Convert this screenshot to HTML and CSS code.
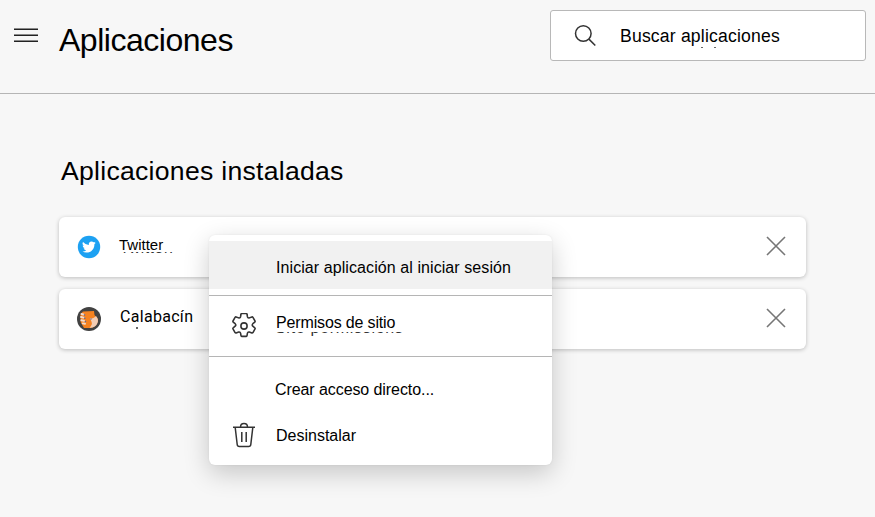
FILE: index.html
```html
<!DOCTYPE html>
<html lang="es">
<head>
<meta charset="utf-8">
<title>Aplicaciones</title>
<link rel="stylesheet" href="styles.css">
</head>
<body>
<header class="topbar">
  <svg class="burger" width="24" height="14" viewBox="0 0 24 14"><path fill="#8a8a8a" d="M0 0h24v1H0zM0 6h24v1H0zM0 12h24v1H0z"/><path fill="#222" d="M0 1h24v1H0zM0 7h24v1H0zM0 13h24v1H0z"/></svg>
  <h1 class="title">Aplicaciones</h1>
  <div class="search">
    <svg class="search-icon" width="24" height="24" viewBox="0 0 24 24" fill="none" stroke="#333" stroke-width="1.5"><circle cx="9.300" cy="9.500" r="7.8"/><path d="M14.900 15.100l6.400 6.400"/></svg>
    <span class="label search-label">Buscar aplicaciones<span class="trace trace-search" aria-hidden="true"><i></i><i></i></span></span>
  </div>
</header>
<main class="content">
  <h2 class="subtitle">Aplicaciones instaladas</h2>
  <div class="card">
    <svg class="app-icon" width="24" height="24" viewBox="0 0 24 24"><circle cx="12" cy="12" r="11.2" fill="#1da1f2"/><path fill="#fff" transform="translate(5.1 5.2) scale(.57)" d="M23.95 4.57a10 10 0 0 1-2.82.77 4.96 4.96 0 0 0 2.16-2.72 9.9 9.9 0 0 1-3.12 1.18 4.92 4.92 0 0 0-8.38 4.48A13.93 13.93 0 0 1 1.64 3.16a4.92 4.92 0 0 0 1.52 6.57 4.9 4.9 0 0 1-2.23-.61v.06a4.92 4.92 0 0 0 3.95 4.83 5 5 0 0 1-2.21.08 4.94 4.94 0 0 0 4.6 3.42A9.87 9.87 0 0 1 0 19.54a13.99 13.99 0 0 0 7.55 2.21c9.05 0 14-7.5 14-13.98l-.02-.64a9.94 9.94 0 0 0 2.42-2.56z"/></svg>
    <span class="label app-name twitter">Twitter<span class="trace trace-twitter" aria-hidden="true"><span>Twitter.</span></span></span>
    <svg class="close" width="20" height="20" viewBox="0 0 20 20"><path d="M1 1l18 18M19 1L1 19" stroke="#767676" stroke-width="1.6"/></svg>
  </div>
  <div class="card">
    <svg class="app-icon" width="24" height="24" viewBox="0 0 24 24"><circle cx="12" cy="12" r="12" fill="#424242"/><path fill="#f58220" d="M6 4.500l11-.5.5 4 3.500 4c0 5-3 8-7 9H7L3.500 15V7z"/><path fill="#f3cdb4" d="M13 11c2 1 4 0 6-2 2 2 2.500 5 1.500 7-1 3-4 5-8 4.800 2-2 3-4 2-6z"/><g fill="none" stroke="#f3dccd" stroke-width="1.900" stroke-linecap="round"><path d="M4.500 7l2 .5M4 10l2.500 .6M4.300 13.200l2.700 .6M5.700 16.400l2.300 .4"/></g><g fill="#5267a5"><circle cx="7.500" cy="8" r=".8"/><circle cx="7.800" cy="11.200" r=".8"/><circle cx="8.500" cy="14.500" r=".7"/><circle cx="14" cy="12" r=".7"/></g></svg>
    <span class="label app-name calabacin">Calabacín<span class="trace trace-calabacin" aria-hidden="true"><i></i></span></span>
    <svg class="close" width="20" height="20" viewBox="0 0 20 20"><path d="M1 1l18 18M19 1L1 19" stroke="#767676" stroke-width="1.6"/></svg>
  </div>
</main>
<div class="menu">
  <div class="item active"><span class="slot"></span><span class="label launch">Iniciar aplicación al iniciar sesión</span></div>
  <div class="item permissions">
    <span class="slot"><svg width="26" height="26" viewBox="0.500 0.500 25 25" fill="none" stroke="#333" stroke-width="1.5" stroke-linejoin="round"><path d="M10.800 1h4.400q.6 0 .7.700l.4 2.400q.3 1.400 1.800 1.100l2.500-.9q.6-.2 1 .4l2 3.500q.3.600-.2 1l-1.900 1.600q-1.200 1.200 0 2.400l1.900 1.600q.5.400.2 1l-2 3.500q-.4.600-1 .4l-2.500-.9q-1.500-.3-1.800 1.100l-.4 2.400q-.1.700-.7.700h-4.400q-.6 0-.7-.7l-.4-2.400q-.3-1.400-1.800-1.100l-2.500.9q-.6.200-1-.4l-2-3.500q-.3-.6.200-1l1.900-1.600q1.200-1.200 0-2.400L2.600 9.200q-.5-.4-.2-1l2-3.500q.4-.6 1-.4l2.500.9q1.500.3 1.800-1.100l.4-2.400q.1-.7.700-.7z"/><circle cx="13" cy="13" r="3"/></svg></span>
    <span class="label perm">Permisos de sitio<span class="trace trace-perm" aria-hidden="true"><span>Site permissions</span></span></span>
  </div>
  <div class="item shortcut"><span class="slot"></span><span class="label create">Crear acceso directo...</span></div>
  <div class="item uninstall">
    <span class="slot"><svg width="24" height="26" viewBox="0 0 24 26" fill="none" stroke="#333" stroke-width="1.5"><path d="M1 5.300h22M8.500 5C8.500 .3 15.500 .3 15.500 5M3.200 5.500l2 17q.2 2 2.200 2h9.200q2 0 2.200-2l2-17M9.800 10v10M14.200 10v10"/></svg></span>
    <span class="label uninstall-label">Desinstalar</span>
  </div>
</div>
</body>
</html>
```

FILE: styles.css
```css
* { box-sizing: border-box; }
body {
  margin: 0;
  height: 517px;
  overflow: hidden;
  background: #f7f7f7;
  color: #000;
  font-family: "Liberation Sans", Arial, sans-serif;
  font-size: 16px;
}
svg { display: block; flex: none; }
h1, h2 { margin: 0; font-weight: 400; white-space: nowrap; }
.topbar {
  display: flex;
  align-items: flex-start;
  height: 94px;
  padding: 10px 9px 0 14px;
  border-bottom: 1px solid #b5b5b5;
}
.burger { margin-top: 18px; }
.title {
  margin: 12px 0 0 21px;
  font-size: 32px;
  line-height: 36px;
  letter-spacing: -.48px;
}
.search {
  display: flex;
  align-items: center;
  width: 316px;
  height: 51px;
  margin-left: auto;
  padding-left: 23px;
  background: #fff;
  border: 1px solid #b8b8b8;
  border-radius: 3px;
}
.label { position: relative; white-space: nowrap; line-height: 20px; }
.search-label { margin: 1px 0 0 22px; font-size: 17.6px; letter-spacing: .18px; }
.content { padding: 62px 69px 0 59px; }
.subtitle {
  margin: 0 0 31px 2px;
  font-size: 26.6px;
  line-height: 30px;
  letter-spacing: .27px;
}
.card {
  display: flex;
  align-items: center;
  height: 60px;
  margin-bottom: 12px;
  padding: 0 20px 0 18px;
  background: #fff;
  border-radius: 6px;
  box-shadow: 0 1px 4px rgba(0, 0, 0, .24);
}
.app-name { margin: 0 0 4px 18px; font-family: Roboto, "Liberation Sans", sans-serif; }
.twitter { font-size: 15px; font-family: "Liberation Sans", sans-serif; }
.calabacin { margin-left: 19px; letter-spacing: .3px; }
.close { margin: -2px 0 0 auto; }

.menu {
  position: absolute;
  left: 209px;
  top: 235px;
  width: 343px;
  height: 230px;
  padding-top: 6px;
  background: #fff;
  border-radius: 6px;
  box-shadow: 0 8px 26px rgba(0, 0, 0, .2), 0 0 2px rgba(0, 0, 0, .08);
}
.item { display: flex; align-items: center; }
.slot { display: flex; justify-content: center; width: 26px; margin: 0 19px 0 22px; }
.active { height: 48px; padding-top: 5px; background: #f1f1f1; }
.permissions {
  height: 62px;
  margin-top: 6px;
  border-top: 1px solid #b5b5b5;
  border-bottom: 1px solid #b5b5b5;
}
.shortcut { height: 62px; padding-top: 4px; }
.uninstall { height: 32px; }
.uninstall-label { margin-top: 2px; }
.launch { letter-spacing: .08px; }
.perm { margin-bottom: 7px; letter-spacing: -.15px; }
.create { margin-left: -1px; letter-spacing: -.08px; }

/* clipped lower edges of secondary text */
.trace { position: absolute; overflow: hidden; color: #333; }
.trace > span { position: absolute; left: 0; bottom: 0; }
.trace-twitter { left: 1px; top: 17px; width: 60px; height: 2px; letter-spacing: .8px; }
.trace-twitter > span { bottom: -4px; }
.trace-perm { left: -1px; top: 19px; width: 130px; height: 4px; letter-spacing: .7px; }
.trace-perm > span { bottom: -2px; }
.trace i { position: absolute; top: 0; width: 2px; height: 1px; background: #666; }
.trace-search { left: 81px; top: 21px; width: 16px; height: 1px; }
.trace-search i + i { left: 13px; }
.trace-calabacin { left: 16px; top: 20px; width: 2px; height: 2px; }
.trace-calabacin i { height: 2px; }
```
